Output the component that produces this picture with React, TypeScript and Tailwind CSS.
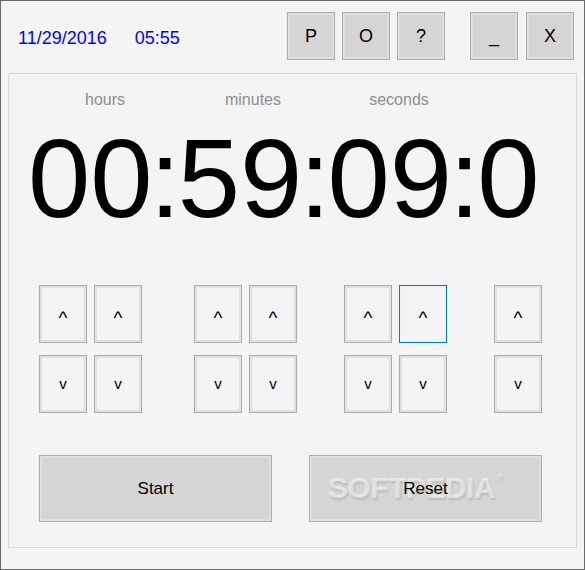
const topButtons = ['P', 'O', '?']
const windowButtons = ['_', 'X']

// button groups for hours, minutes, seconds, tenths
const groups = [
  { cols: 2, margin: 'ml-0' },
  { cols: 2, margin: 'ml-[52px]' },
  { cols: 2, margin: 'ml-[47px]' },
  { cols: 1, margin: 'ml-[47px]' },
]

function TopButton({ label }: { label: string }) {
  return (
    <button className="w-[48px] h-[48px] border border-[#adadad] bg-[#d5d5d5] shadow-[inset_0_0_0_2px_#dfdfdf] flex items-center justify-center text-[18px] text-black">
      {label}
    </button>
  )
}

function ArrowButton({ up, focused }: { up: boolean; focused?: boolean }) {
  return (
    <button
      className={
        focused
          ? 'w-[48px] h-[58px] border border-[#0078d7] bg-[#f4f4f4] shadow-[inset_0_0_0_2px_#eef2f6] flex items-center justify-center text-black'
          : 'w-[48px] h-[58px] border border-[#adadad] bg-[#f4f4f4] shadow-[inset_0_0_0_2px_#e1e1e1] flex items-center justify-center text-black'
      }
    >
      {up ? (
        <span className="text-[19px] leading-none translate-y-[3px]">^</span>
      ) : (
        <span className="text-[15px] leading-none -translate-y-[1px]">v</span>
      )}
    </button>
  )
}

export default function App() {
  const time = '00:59:09:0'.split('')
  return (
    <div className="w-[585px] h-[570px] border border-[#6b6b6b] bg-[#f4f4f4] flex flex-col font-['Liberation_Sans',Arial,sans-serif]">
      {/* title bar */}
      <div className="h-[72px] flex items-start pt-[11px] pl-[17px] pr-[10px]">
        <div className="h-[48px] flex items-center pt-[4px] text-[18px] text-[#0000ff]">
          <span>11/29/2016</span>
          <span className="ml-[28px]">05:55</span>
        </div>
        <div className="ml-auto flex gap-[7px]">
          {topButtons.map((b) => (
            <TopButton key={b} label={b} />
          ))}
        </div>
        <div className="ml-[25px] flex gap-[8px]">
          {windowButtons.map((b) => (
            <TopButton key={b} label={b} />
          ))}
        </div>
      </div>

      {/* main panel */}
      <div className="mx-[7px] mb-[21px] flex-1 border border-[#dadada] flex flex-col">
        <div className="mt-[16px] flex h-[20px] leading-[20px] text-[16px] text-[#8e8e8e]">
          <span className="ml-[46px] w-[100px] text-center">hours</span>
          <span className="ml-[48px] w-[100px] text-center">minutes</span>
          <span className="ml-[46px] w-[100px] text-center">seconds</span>
        </div>

        <div className="mt-[13px] pl-[19px] h-[112px] text-[112px] leading-[112px] whitespace-nowrap text-black">
          {time.map((c, i) =>
            c === ':' ? (
              <span key={i} className="mx-[-3px]">:</span>
            ) : (
              <span key={i}>{c}</span>
            )
          )}
        </div>

        <div className="mt-[50px] pl-[30px] flex">
          {groups.map((g, gi) => (
            <div
              key={gi}
              className={`${g.margin} grid ${g.cols === 2 ? 'grid-cols-2' : 'grid-cols-1'} gap-x-[7px] gap-y-[12px]`}
            >
              {Array.from({ length: g.cols }).map((_, ci) => (
                <ArrowButton key={`u${ci}`} up focused={gi === 2 && ci === 1} />
              ))}
              {Array.from({ length: g.cols }).map((_, ci) => (
                <ArrowButton key={`d${ci}`} up={false} />
              ))}
            </div>
          ))}
        </div>

        <div className="mt-[42px] pl-[30px] flex gap-[37px]">
          <button className="w-[233px] h-[67px] border border-[#adadad] bg-[#d5d5d5] shadow-[inset_0_0_0_2px_#dfdfdf] flex items-center justify-center text-[17px] text-black">
            Start
          </button>
          <button className="relative w-[233px] h-[67px] border border-[#adadad] bg-[#d5d5d5] shadow-[inset_0_0_0_2px_#dfdfdf] flex items-center justify-center text-[17px] text-black">
            <span className="absolute left-[18px] top-[17px] flex items-start text-[30px] leading-none font-bold tracking-[-0.5px] text-white/50 [text-shadow:1px_2px_2px_rgba(0,0,0,0.12)]">
              SOFTPEDIA
              <span className="ml-[1px] text-[9px] leading-none">®</span>
            </span>
            <span className="relative">Reset</span>
          </button>
        </div>
      </div>
    </div>
  )
}
